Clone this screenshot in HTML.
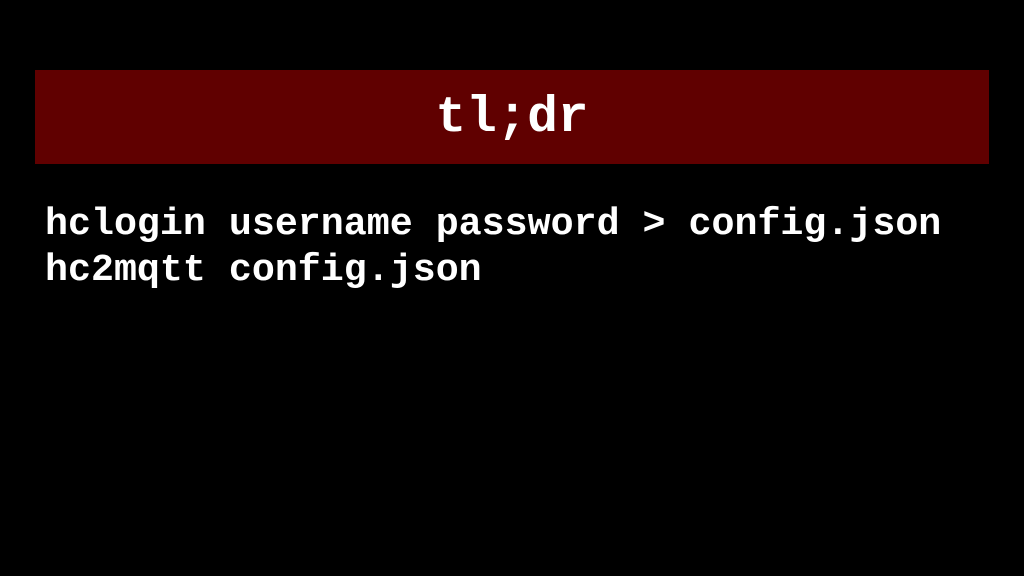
<!DOCTYPE html>
<html><head><meta charset="utf-8"><style>
html,body{margin:0;padding:0;background:#000;width:1024px;height:576px;overflow:hidden}
.banner{position:absolute;left:35px;top:70px;width:954px;height:94px;background:#600000}
.title{position:absolute;left:0;width:1024px;top:91px;text-align:center;color:#fff;font:bold 51px/56px "Liberation Mono",monospace}
.code{position:absolute;left:45px;top:201px;color:#fff;font:bold 38.3px/46px "Liberation Mono",monospace;white-space:pre}
</style></head><body>
<div class="banner"></div>
<div class="title">tl;dr</div>
<div class="code">hclogin username password &gt; config.json
hc2mqtt config.json</div>
</body></html>
